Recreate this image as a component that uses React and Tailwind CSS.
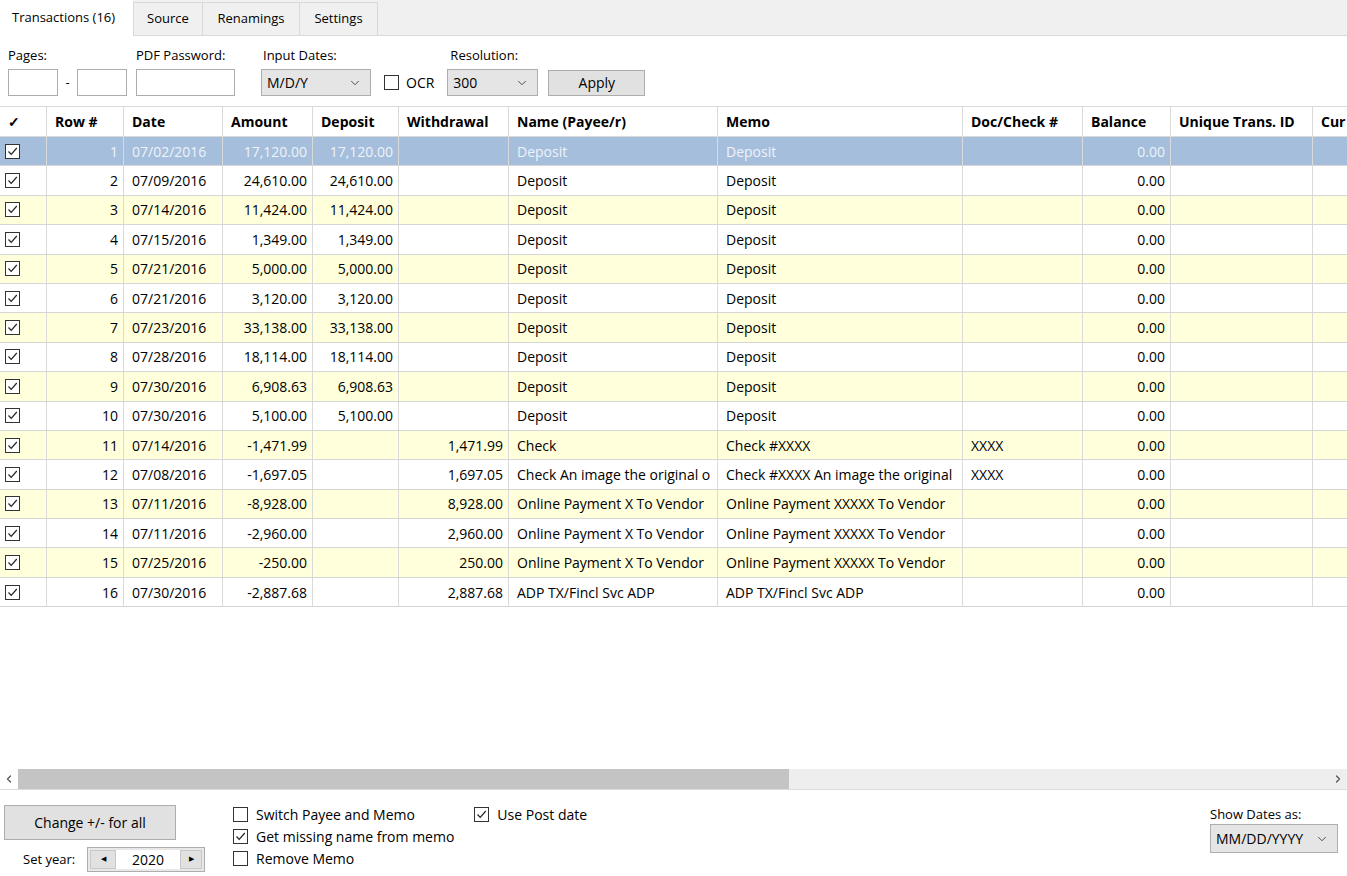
import React from 'react';
import { ChevronDown, ChevronLeft, ChevronRight } from 'lucide-react';

const rows = [
  [1, '07/02/2016', '17,120.00', '17,120.00', '', 'Deposit', 'Deposit', ''],
  [2, '07/09/2016', '24,610.00', '24,610.00', '', 'Deposit', 'Deposit', ''],
  [3, '07/14/2016', '11,424.00', '11,424.00', '', 'Deposit', 'Deposit', ''],
  [4, '07/15/2016', '1,349.00', '1,349.00', '', 'Deposit', 'Deposit', ''],
  [5, '07/21/2016', '5,000.00', '5,000.00', '', 'Deposit', 'Deposit', ''],
  [6, '07/21/2016', '3,120.00', '3,120.00', '', 'Deposit', 'Deposit', ''],
  [7, '07/23/2016', '33,138.00', '33,138.00', '', 'Deposit', 'Deposit', ''],
  [8, '07/28/2016', '18,114.00', '18,114.00', '', 'Deposit', 'Deposit', ''],
  [9, '07/30/2016', '6,908.63', '6,908.63', '', 'Deposit', 'Deposit', ''],
  [10, '07/30/2016', '5,100.00', '5,100.00', '', 'Deposit', 'Deposit', ''],
  [11, '07/14/2016', '-1,471.99', '', '1,471.99', 'Check', 'Check #XXXX', 'XXXX'],
  [12, '07/08/2016', '-1,697.05', '', '1,697.05', 'Check An image the original o', 'Check #XXXX An image the original', 'XXXX'],
  [13, '07/11/2016', '-8,928.00', '', '8,928.00', 'Online Payment X To Vendor', 'Online Payment XXXXX To Vendor', ''],
  [14, '07/11/2016', '-2,960.00', '', '2,960.00', 'Online Payment X To Vendor', 'Online Payment XXXXX To Vendor', ''],
  [15, '07/25/2016', '-250.00', '', '250.00', 'Online Payment X To Vendor', 'Online Payment XXXXX To Vendor', ''],
  [16, '07/30/2016', '-2,887.68', '', '2,887.68', 'ADP TX/Fincl Svc ADP', 'ADP TX/Fincl Svc ADP', ''],
];

const grid = 'grid grid-cols-[47px_77px_99px_90px_86px_110px_209px_245px_120px_88px_142px_120px]';

function Box({ checked }) {
  return (
    <span className="inline-flex w-[15px] h-[15px] border border-[#333] bg-white items-center justify-center shrink-0">
      {checked && (
        <svg width="11" height="11" viewBox="0 0 11 11">
          <polyline points="1.5,5.5 4.2,8.3 9.8,2" fill="none" stroke="#222" strokeWidth="1.2" />
        </svg>
      )}
    </span>
  );
}

function Select({ value, className }) {
  return (
    <div className={`h-[27px] bg-[#e5e5e5] border border-[#adadad] flex items-center justify-between pl-[5px] pr-[8px] text-[14px] ${className}`}>
      <span>{value}</span>
      <ChevronDown className="w-[14px] h-[14px] text-[#444]" strokeWidth={1.6} />
    </div>
  );
}

function Cell({ children, right }) {
  return (
    <div className={`border-r border-[#dadada] overflow-hidden whitespace-nowrap flex items-center ${right ? 'justify-end pr-[5px]' : 'pl-[8px]'}`}>
      {children}
    </div>
  );
}

export default function App() {
  return (
    <div className="w-[1347px] h-[876px] overflow-hidden bg-white flex flex-col text-black" style={{ fontFamily: '"Open Sans", "Noto Sans", sans-serif' }}>
      {/* Tabs */}
      <div className="h-[36px] flex bg-[#f0f0f0] border-b border-[#d9d9d9] text-[13px] shrink-0">
        <div className="w-[133px] bg-white flex items-center pl-[12px] -mb-px">Transactions (16)</div>
        <div className="w-[70px] mt-[2px] border border-b-0 border-[#d9d9d9] flex items-center justify-center">Source</div>
        <div className="w-[97px] mt-[2px] border border-l-0 border-b-0 border-[#d9d9d9] flex items-center justify-center">Renamings</div>
        <div className="w-[78px] mt-[2px] border border-l-0 border-b-0 border-[#d9d9d9] flex items-center justify-center">Settings</div>
      </div>

      {/* Toolbar */}
      <div className="h-[70px] shrink-0 flex items-start pt-[10px] text-[13px]">
        <div className="ml-[8px] flex flex-col">
          <span className="h-[23px]">Pages:</span>
          <div className="flex items-center">
            <div className="w-[50px] h-[27px] border border-[#acacac]" />
            <span className="w-[19px] text-center">-</span>
            <div className="w-[50px] h-[27px] border border-[#acacac]" />
          </div>
        </div>
        <div className="ml-[9px] flex flex-col">
          <span className="h-[23px]">PDF Password:</span>
          <div className="w-[99px] h-[27px] border border-[#acacac]" />
        </div>
        <div className="ml-[26px] flex flex-col">
          <span className="h-[23px] pl-[2px]">Input Dates:</span>
          <div className="flex items-center">
            <Select value="M/D/Y" className="w-[110px]" />
            <span className="ml-[13px] flex"><Box /></span>
            <span className="ml-[7px] text-[14px]">OCR</span>
          </div>
        </div>
        <div className="ml-[13px] flex flex-col">
          <span className="h-[23px] pl-[3px]">Resolution:</span>
          <div className="flex items-center">
            <Select value="300" className="w-[91px]" />
            <button className="ml-[10px] w-[97px] h-[26px] bg-[#e1e1e1] border border-[#adadad] text-[14px]">Apply</button>
          </div>
        </div>
      </div>

      {/* Table */}
      <div className="flex-1 border-t border-[#dadada] overflow-hidden text-[14px]">
        <div className={`${grid} h-[30px] border-b border-[#dadada] font-bold`}>
          <Cell>✓</Cell>
          <Cell>Row #</Cell>
          <Cell>Date</Cell>
          <Cell>Amount</Cell>
          <Cell>Deposit</Cell>
          <Cell>Withdrawal</Cell>
          <Cell>Name (Payee/r)</Cell>
          <Cell>Memo</Cell>
          <Cell>Doc/Check #</Cell>
          <Cell>Balance</Cell>
          <Cell>Unique Trans. ID</Cell>
          <Cell>Cur</Cell>
        </div>
        {rows.map((r, i) => {
          const sel = i === 0;
          const bg = sel ? 'bg-[#a5bedb] text-[#eef3fa]' : i % 2 === 0 ? 'bg-[#ffffdc]' : 'bg-white';
          return (
            <div key={r[0]} className={`${grid} h-[29.4px] border-b border-[#d6d6d6] ${bg}`}>
              <div className="border-r border-[#dadada] flex items-center pl-[5px]"><Box checked /></div>
              <Cell right>{r[0]}</Cell>
              <Cell>{r[1]}</Cell>
              <Cell right>{r[2]}</Cell>
              <Cell right>{r[3]}</Cell>
              <Cell right>{r[4]}</Cell>
              <Cell>{r[5]}</Cell>
              <Cell>{r[6]}</Cell>
              <Cell>{r[7]}</Cell>
              <Cell right>0.00</Cell>
              <Cell></Cell>
              <Cell></Cell>
            </div>
          );
        })}
      </div>

      {/* Horizontal scrollbar */}
      <div className="h-[21px] shrink-0 flex items-center bg-[#eeeeee] border-b border-[#dcdcdc]">
        <div className="w-[18px] h-full flex items-center justify-center bg-white"><ChevronLeft className="w-[12px] h-[12px] text-[#555]" strokeWidth={2.5} /></div>
        <div className="w-[771px] h-full bg-[#c4c4c4]" />
        <div className="flex-1" />
        <div className="w-[18px] h-full flex items-center justify-center"><ChevronRight className="w-[12px] h-[12px] text-[#555]" strokeWidth={2.5} /></div>
      </div>

      {/* Bottom controls */}
      <div className="h-[86px] shrink-0 flex items-start text-[14px]">
        <div className="ml-[4px] mt-[15px] flex flex-col">
          <button className="w-[172px] h-[35px] bg-[#e1e1e1] border border-[#adadad]">Change +/- for all</button>
          <div className="mt-[7px] flex items-center">
            <span className="ml-[19px] w-[64px] text-[13px]">Set year:</span>
            <div className="w-[118px] h-[25px] border border-[#adadad] bg-[#e8e8e8] flex items-center p-[2px]">
              <div className="w-[26px] h-full border border-[#c8c8c8] bg-[#e1e1e1] flex items-center justify-center text-[7px]">◀</div>
              <div className="flex-1 h-full bg-white flex items-center justify-center text-[14px]">2020</div>
              <div className="w-[22px] h-full border border-[#c8c8c8] bg-[#e1e1e1] flex items-center justify-center text-[7px]">▶</div>
            </div>
          </div>
        </div>
        <div className="ml-[28px] mt-[17px] flex flex-col gap-[7px]">
          <label className="flex items-center gap-[8px] h-[15px]"><Box /><span>Switch Payee and Memo</span></label>
          <label className="flex items-center gap-[8px] h-[15px]"><Box checked /><span>Get missing name from memo</span></label>
          <label className="flex items-center gap-[8px] h-[15px]"><Box /><span>Remove Memo</span></label>
        </div>
        <label className="ml-[20px] mt-[17px] flex items-center gap-[8px] h-[15px]"><Box checked /><span>Use Post date</span></label>
        <div className="ml-auto mr-[9px] mt-[15px] flex flex-col">
          <span className="text-[13px] h-[19px]">Show Dates as:</span>
          <Select value="MM/DD/YYYY" className="w-[128px] h-[29px]" />
        </div>
      </div>
    </div>
  );
}
